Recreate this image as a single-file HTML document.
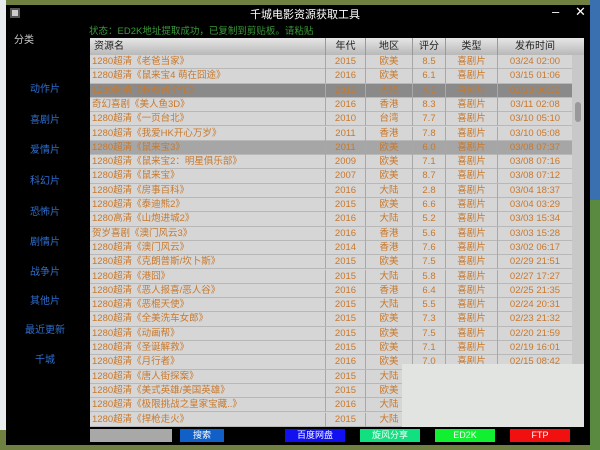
<!DOCTYPE html>
<html><head><meta charset="utf-8"><style>
*{margin:0;padding:0;box-sizing:border-box}
body{width:600px;height:450px;overflow:hidden;position:relative;background:#6f8040;font-family:"Liberation Sans","Noto Sans CJK SC",sans-serif}
.a{position:absolute}
#win{left:6px;top:5px;width:584px;height:440px;background:#000}
.nav{position:absolute;left:20px;width:50px;text-align:center;color:#2f6fd0;font-size:10px}
#tbl{left:90px;top:38px;width:494px;height:389px;background:#d6d6d6}
.row{position:absolute;left:0;width:482px;height:14.3px;border-bottom:1px solid #b8b8b8;font-size:9.5px;color:#c8782c;line-height:14px}
.row span{position:absolute;top:0;text-align:center;border-left:1px solid #a8a8a8;height:14px}
.row span.n{left:0;width:235px;text-align:left;padding-left:2px;border:none}
.c1{left:235px;width:40px}.c2{left:275px;width:47px}.c3{left:322px;width:33px}.c4{left:355px;width:52px}.c5{left:407px;width:75px}
.hd{position:absolute;left:0;top:0;width:494px;height:17px;background:linear-gradient(#e6e6e6,#b8b8b8);font-size:10px;color:#222;line-height:17px}
.hd span{position:absolute;top:0;text-align:center;border-left:1px solid #999;height:17px}
.btn{position:absolute;top:429px;height:13px;font-size:9px;color:#fff;text-align:center;line-height:13px}
</style></head><body>
<div class="a" style="left:0;top:0;width:6px;height:430px;background:#e8ecef"></div>
<div class="a" style="left:590px;top:0;width:10px;height:200px;background:#3a70b0"></div>
<div class="a" style="left:590px;top:200px;width:10px;height:250px;background:#5a8a40"></div>
<div id="win" class="a"></div>
<div class="a" style="left:10px;top:8px;width:10px;height:10px;background:#ccc;border:2px solid #555"></div>
<div class="a" style="left:250px;top:6px;color:#fff;font-size:11px">千城电影资源获取工具</div>
<div class="a" style="left:552px;top:4px;color:#fff;font-size:13px">–</div>
<div class="a" style="left:575px;top:4px;color:#fff;font-size:13px">✕</div>
<div class="a" style="left:89px;top:23px;color:#3a9a3a;font-size:9.5px">状态：ED2K地址提取成功，已复制到剪贴板。请粘贴</div>
<div class="a" style="left:14px;top:31px;color:#ccc;font-size:10px">分类</div>
<div class="nav" style="top:80px">动作片</div><div class="nav" style="top:111px">喜剧片</div><div class="nav" style="top:141px">爱情片</div><div class="nav" style="top:172px">科幻片</div><div class="nav" style="top:203px">恐怖片</div><div class="nav" style="top:233px">剧情片</div><div class="nav" style="top:263px">战争片</div><div class="nav" style="top:292px">其他片</div><div class="nav" style="top:321px">最近更新</div><div class="nav" style="top:351px">千城</div>
<div id="tbl" class="a">
<div class="hd"><span style="left:0;width:235px;text-align:left;padding-left:4px;border:none">资源名</span><span class="c1">年代</span><span class="c2">地区</span><span class="c3">评分</span><span class="c4">类型</span><span class="c5">发布时间</span></div>
<div class="a" style="left:482px;top:17px;width:12px;height:372px;background:#c8c8c8"></div>
<div class="a" style="left:485px;top:64px;width:6px;height:20px;background:#999;border-radius:3px"></div>
<div style="position:absolute;left:0;top:17px">
<div class="row" style="top:0"><span class="n">1280超清《老爸当家》</span><span class="c1">2015</span><span class="c2">欧美</span><span class="c3">8.5</span><span class="c4">喜剧片</span><span class="c5">03/24 02:00</span></div>
<div class="row" style="top:14.3px"><span class="n">1280超清《鼠来宝4 萌在囧途》</span><span class="c1">2016</span><span class="c2">欧美</span><span class="c3">6.1</span><span class="c4">喜剧片</span><span class="c5">03/15 01:06</span></div>
<div class="row" style="top:28.6px;background:#8a8a8a"><span class="n">1280超清《叔叔帮个忙》</span><span class="c1">2016</span><span class="c2">大陆</span><span class="c3">4.1</span><span class="c4">喜剧片</span><span class="c5">03/13 06:32</span></div>
<div class="row" style="top:42.9px"><span class="n">奇幻喜剧《美人鱼3D》</span><span class="c1">2016</span><span class="c2">香港</span><span class="c3">8.3</span><span class="c4">喜剧片</span><span class="c5">03/11 02:08</span></div>
<div class="row" style="top:57.2px"><span class="n">1280超清《一页台北》</span><span class="c1">2010</span><span class="c2">台湾</span><span class="c3">7.7</span><span class="c4">喜剧片</span><span class="c5">03/10 05:10</span></div>
<div class="row" style="top:71.5px"><span class="n">1280超清《我爱HK开心万岁》</span><span class="c1">2011</span><span class="c2">香港</span><span class="c3">7.8</span><span class="c4">喜剧片</span><span class="c5">03/10 05:08</span></div>
<div class="row" style="top:85.8px;background:#a6a6a6"><span class="n">1280超清《鼠来宝3》</span><span class="c1">2011</span><span class="c2">欧美</span><span class="c3">6.0</span><span class="c4">喜剧片</span><span class="c5">03/08 07:37</span></div>
<div class="row" style="top:100.1px"><span class="n">1280超清《鼠来宝2：明星俱乐部》</span><span class="c1">2009</span><span class="c2">欧美</span><span class="c3">7.1</span><span class="c4">喜剧片</span><span class="c5">03/08 07:16</span></div>
<div class="row" style="top:114.4px"><span class="n">1280超清《鼠来宝》</span><span class="c1">2007</span><span class="c2">欧美</span><span class="c3">8.7</span><span class="c4">喜剧片</span><span class="c5">03/08 07:12</span></div>
<div class="row" style="top:128.7px"><span class="n">1280超清《房事百科》</span><span class="c1">2016</span><span class="c2">大陆</span><span class="c3">2.8</span><span class="c4">喜剧片</span><span class="c5">03/04 18:37</span></div>
<div class="row" style="top:143px"><span class="n">1280超清《泰迪熊2》</span><span class="c1">2015</span><span class="c2">欧美</span><span class="c3">6.6</span><span class="c4">喜剧片</span><span class="c5">03/04 03:29</span></div>
<div class="row" style="top:157.3px"><span class="n">1280高清《山炮进城2》</span><span class="c1">2016</span><span class="c2">大陆</span><span class="c3">5.2</span><span class="c4">喜剧片</span><span class="c5">03/03 15:34</span></div>
<div class="row" style="top:171.6px"><span class="n">贺岁喜剧《澳门风云3》</span><span class="c1">2016</span><span class="c2">香港</span><span class="c3">5.6</span><span class="c4">喜剧片</span><span class="c5">03/03 15:28</span></div>
<div class="row" style="top:185.9px"><span class="n">1280超清《澳门风云》</span><span class="c1">2014</span><span class="c2">香港</span><span class="c3">7.6</span><span class="c4">喜剧片</span><span class="c5">03/02 06:17</span></div>
<div class="row" style="top:200.2px"><span class="n">1280超清《克朗普斯/坎卜斯》</span><span class="c1">2015</span><span class="c2">欧美</span><span class="c3">7.5</span><span class="c4">喜剧片</span><span class="c5">02/29 21:51</span></div>
<div class="row" style="top:214.5px"><span class="n">1280超清《港囧》</span><span class="c1">2015</span><span class="c2">大陆</span><span class="c3">5.8</span><span class="c4">喜剧片</span><span class="c5">02/27 17:27</span></div>
<div class="row" style="top:228.8px"><span class="n">1280超清《恶人报喜/恶人谷》</span><span class="c1">2016</span><span class="c2">香港</span><span class="c3">6.4</span><span class="c4">喜剧片</span><span class="c5">02/25 21:35</span></div>
<div class="row" style="top:243.1px"><span class="n">1280超清《恶棍天使》</span><span class="c1">2015</span><span class="c2">大陆</span><span class="c3">5.5</span><span class="c4">喜剧片</span><span class="c5">02/24 20:31</span></div>
<div class="row" style="top:257.4px"><span class="n">1280超清《全美洗车女郎》</span><span class="c1">2015</span><span class="c2">欧美</span><span class="c3">7.3</span><span class="c4">喜剧片</span><span class="c5">02/23 21:32</span></div>
<div class="row" style="top:271.7px"><span class="n">1280超清《动画帮》</span><span class="c1">2015</span><span class="c2">欧美</span><span class="c3">7.5</span><span class="c4">喜剧片</span><span class="c5">02/20 21:59</span></div>
<div class="row" style="top:286px"><span class="n">1280超清《圣诞解救》</span><span class="c1">2015</span><span class="c2">欧美</span><span class="c3">7.1</span><span class="c4">喜剧片</span><span class="c5">02/19 16:01</span></div>
<div class="row" style="top:300.3px"><span class="n">1280超清《月行者》</span><span class="c1">2016</span><span class="c2">欧美</span><span class="c3">7.0</span><span class="c4">喜剧片</span><span class="c5">02/15 08:42</span></div>
<div class="row" style="top:314.6px"><span class="n">1280超清《唐人街探案》</span><span class="c1">2015</span><span class="c2">大陆</span></div>
<div class="row" style="top:328.9px"><span class="n">1280超清《美式英雄/美国英雄》</span><span class="c1">2015</span><span class="c2">欧美</span></div>
<div class="row" style="top:343.2px"><span class="n">1280超清《极限挑战之皇家宝藏..》</span><span class="c1">2016</span><span class="c2">大陆</span></div>
<div class="row" style="top:357.5px"><span class="n">1280超清《捍枪走火》</span><span class="c1">2015</span><span class="c2">大陆</span></div>
</div>
<div class="a" style="left:312px;top:326px;width:182px;height:63px;background:#e2e4e2"></div>
</div>
<div class="btn" style="left:90px;width:82px;background:#a8a8a8"></div>
<div class="btn" style="left:180px;width:44px;background:#1060c8">搜索</div>
<div class="btn" style="left:285px;width:60px;background:#1010f0">百度网盘</div>
<div class="btn" style="left:360px;width:60px;background:#10e080">旋风分享</div>
<div class="btn" style="left:435px;width:60px;background:#10f030">ED2K</div>
<div class="btn" style="left:510px;width:60px;background:#f01010">FTP</div>
</body></html>
